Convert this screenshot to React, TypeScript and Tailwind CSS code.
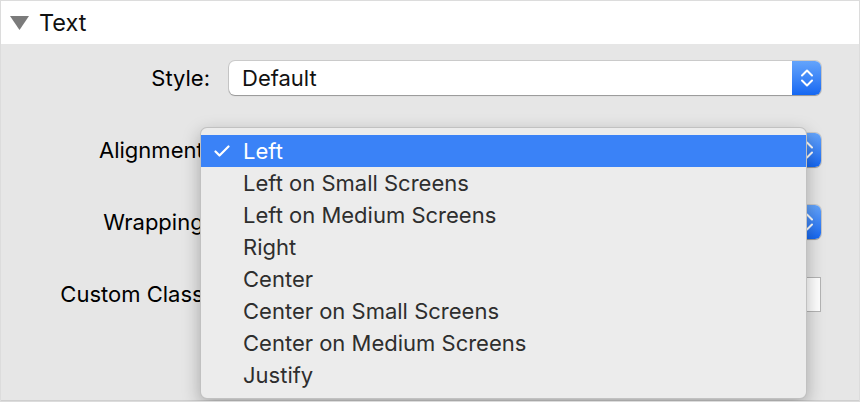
import React from "react";

const items = [
  "Left",
  "Left on Small Screens",
  "Left on Medium Screens",
  "Right",
  "Center",
  "Center on Small Screens",
  "Center on Medium Screens",
  "Justify",
];

function Stepper() {
  return (
    <div className="flex w-[29px] shrink-0 items-center justify-center rounded-r-[6px] bg-gradient-to-b from-[#64a4fb] to-[#1467f2]">
      <svg width="14" height="20" viewBox="0 0 14 20" fill="none" stroke="white" strokeWidth="2" strokeLinecap="round" strokeLinejoin="round">
        <polyline points="2,7.5 7,2.5 12,7.5" />
        <polyline points="2,12.5 7,17.5 12,12.5" />
      </svg>
    </div>
  );
}

function Select({ value }: { value?: string }) {
  return (
    <div className="flex h-[34px] w-full rounded-[6px] bg-white shadow-[0_0_0_1px_rgba(0,0,0,0.12),0_1px_1px_rgba(0,0,0,0.25)]">
      <div className="flex flex-1 items-center pl-[13px] text-[22px] text-[#111]">{value}</div>
      <Stepper />
    </div>
  );
}

function Row({ label, children }: { label: string; children: React.ReactNode }) {
  return (
    <div className="grid grid-cols-[209px_592px] items-center gap-x-[19px]">
      <div className="text-right text-[22px] text-black">{label}</div>
      {children}
    </div>
  );
}

export default function App() {
  const font = { fontFamily: "Inter, 'Noto Sans', sans-serif" };
  return (
    <div style={font} className="relative flex h-[402px] w-[860px] flex-col overflow-hidden border border-[#dcdcdc] bg-white">
      <div className="flex h-[43px] shrink-0 items-center gap-[10px] bg-white pl-[9px]">
        <svg width="19" height="14" viewBox="0 0 19 14">
          <polygon points="0,0 19,0 9.5,14" fill="#7b7b7b" />
        </svg>
        <span className="text-[23.5px] text-[#111]">Text</span>
      </div>
      <div className="flex flex-1 flex-col gap-[38px] border-b border-[#cfcfcf] bg-[#e6e6e6] pt-[17px]">
        <Row label="Style:"><Select value="Default" /></Row>
        <Row label="Alignment:"><Select /></Row>
        <Row label="Wrapping:"><Select /></Row>
        <Row label="Custom Class:">
          <div className="h-[35px] w-full border border-[#b4b4b4] bg-white" />
        </Row>
      </div>

      <div className="absolute left-[199px] top-[126px] w-[607px] rounded-[7px] border border-[rgba(0,0,0,0.18)] bg-[#ececec] py-[7px] shadow-[0_6px_18px_rgba(0,0,0,0.28)]">
        {items.map((it, i) => (
          <div
            key={it}
            className={
              i === 0
                ? "flex h-[32px] items-center bg-[#3a82f7] text-[22px] text-white"
                : "flex h-[32px] items-center text-[22px] text-[#2e2e2e]"
            }
          >
            <div className="flex w-[42px] justify-center">
              {i === 0 && (
                <svg width="16" height="12" viewBox="0 0 16 12" fill="none" stroke="white" strokeWidth="2.2" strokeLinecap="round" strokeLinejoin="round">
                  <polyline points="1.5,6.5 5.5,10.5 14.5,1.5" />
                </svg>
              )}
            </div>
            <span>{it}</span>
          </div>
        ))}
      </div>
    </div>
  );
}
